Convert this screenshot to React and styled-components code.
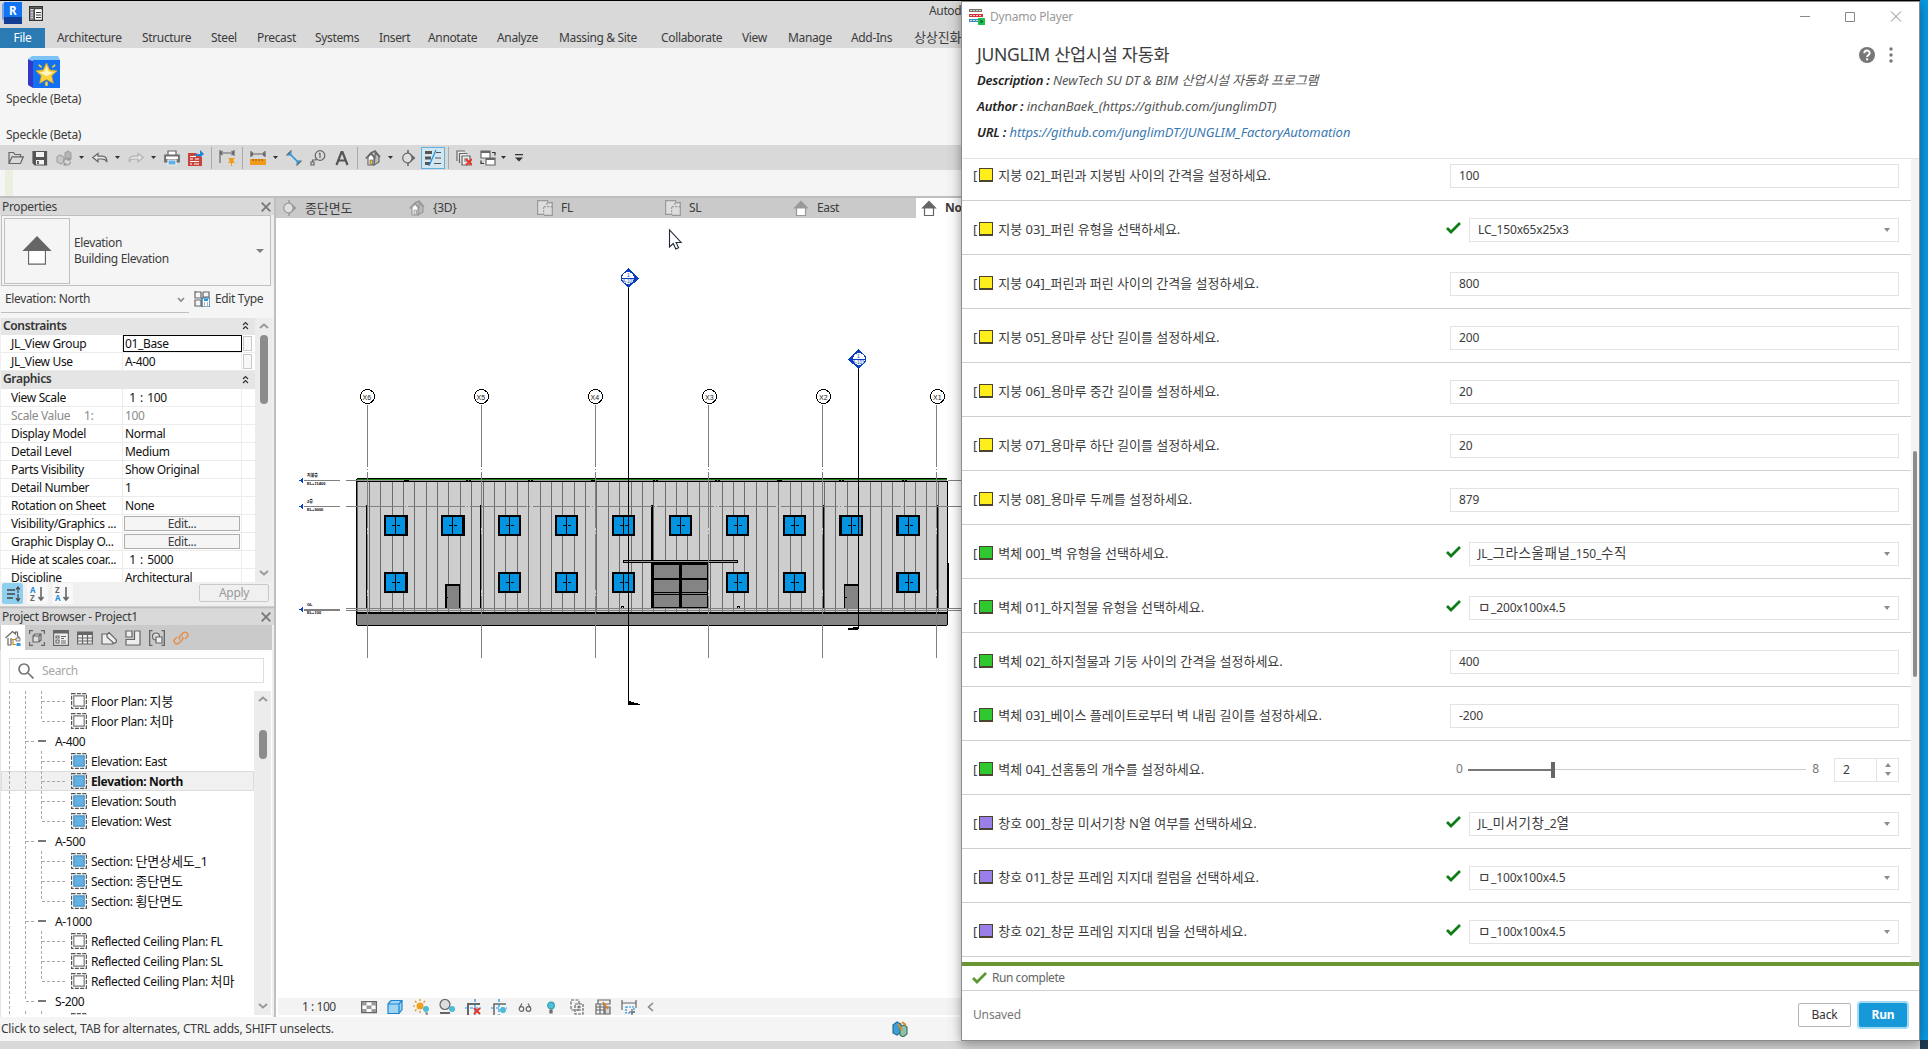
import React from 'react';
import styled, { createGlobalStyle, css } from 'styled-components';

const Global = createGlobalStyle`
  * { box-sizing: border-box; }
  body { margin: 0; overflow: hidden; background: #0a9be6; }
  svg { display: block; flex: none; }
`;
const ui = '"Noto Sans", "Noto Sans CJK KR", sans-serif';

const Desktop = styled.div`
  position: relative; width: 1928px; height: 1049px; overflow: hidden;
  font: 12px/16px ${ui}; letter-spacing: -0.35px; color: #3c3c3c; white-space: nowrap;
  background: linear-gradient(#1b3c52, #1b3c52) right bottom / 8px 9px no-repeat, #0a9be6;
`;
const Revit = styled.div`
  width: 1920px; height: 1049px; border-top: 1px solid #000; background: #d9d9d9;
  display: flex; flex-direction: column;
`;
const Ko = styled.span`font-size: 13px; letter-spacing: -0.1px;`;

/* ---------- title, ribbon ---------- */
const TitleBar = styled.div`
  height: 27px; display: flex; align-items: flex-start; padding: 1px 0 0 2px; flex: none;
`;
const AppTitle = styled.span`margin: 1px 0 0 886px; width: 32px; overflow: hidden;`;
const Tabs = styled.div`height: 20px; display: flex; flex: none; line-height: 19px;`;
const FileTab = styled.div`width: 45px; background: #2a7ab4; color: #fff; text-align: center; margin-right: 12px;`;
const Tab = styled.div`width: ${p => p.$w}px; flex: none;`;
const Ribbon = styled.div`
  height: 97px; background: #f5f5f5; flex: none; display: flex; flex-direction: column;
  padding: 8px 0 0 6px;
  svg { margin-left: 22px; }
`;
const RibbonText = styled.div`margin-top: ${p => p.$t}px; letter-spacing: -0.25px;`;
const QuickBar = styled.div`height: 25px; display: flex; align-items: center; flex: none;`;
const Slot = styled.div`
  margin-left: ${p => p.$g}px; width: ${p => p.$w || 16}px; flex: none;
  ${p => p.$on && css`height: 22px; border: 1px solid #5db2e2; background: #d3e6f0; padding: 2px 3px;`}
`;
const Divider = styled.div`width: 1px; height: 22px; margin-left: ${p => p.$g}px; background: #a9a9a9;`;
const Caret = styled.div`
  width: 5px; height: 3px; flex: none; margin-left: ${p => p.$g}px; background: #333;
  clip-path: polygon(0 0, 100% 0, 50% 100%);
`;
const OptionsBar = styled.div`
  height: 28px; background: #f5f5f5; border-bottom: 2px solid #bfbfbf; flex: none; padding-left: 5px;
`;
const GreenMark = styled.div`width: 8px; height: 26px; background: #ebefe0;`;

/* ---------- work area ---------- */
const Work = styled.div`height: 819px; display: flex; flex: none;`;
const Side = styled.div`
  width: 276px; border-right: 2px solid #bfbfbf; background: #f0f0f0; flex: none;
  display: flex; flex-direction: column;
`;
const PanelHead = styled.div`
  height: ${p => p.$h || 17}px; background: #d9d9d9; display: flex; align-items: center; justify-content: space-between;
  padding: 0 3px 0 2px; flex: none;
`;
const TypeBox = styled.div`
  height: 71px; margin: 0 3px 0 1px; border: 1px solid #bfbfbf; background: #f5f5f5; flex: none;
  display: flex; align-items: center; padding: 0 6px 0 2px;
`;
const TypePic = styled.div`
  width: 66px; height: 66px; border: 1px solid #bfbfbf; display: flex; align-items: center; justify-content: center;
  padding-bottom: 2px;
`;
const TypeText = styled.div`flex: 1; padding: 0 0 0 4px;`;
const BigCaret = styled.div`border: 4px solid transparent; border-top-color: #808080; border-bottom: 0;`;
const InstanceRow = styled.div`height: 32px; flex: none; display: flex; padding: 2px 0 4px 1px; background: #f5f5f5;`;
const InstanceSelect = styled.div`
  width: 188px; height: 25px; border-bottom: 1px solid #bfbfbf; padding: 3px 4px; display: flex; justify-content: space-between;
`;
const EditType = styled.div`display: flex; gap: 5px; padding: 3px 0 0 5px;`;
const GridArea = styled.div`height: 264px; flex: none; display: flex; overflow: hidden; padding-left: 1px;`;
const GridRows = styled.div`width: 254px; background: #fff; color: #111;`;
const GroupRow = styled.div`
  height: ${p => p.$h}px; background: #e5e5e5; font-weight: 600; padding: 0 6px 2px 2px; color: #333;
  display: flex; align-items: center; justify-content: space-between;
`;
const PropRow = styled.div`
  height: 18px; display: grid; grid-template-columns: 122px 119px 12px; border-bottom: 1px solid #ececec; line-height: 17px;
  color: ${p => (p.$dim ? '#8a8a8a' : '#111')};
`;
const Cell = styled.div`
  padding-left: ${p => p.$p}px; border-right: 1px solid #ececec; overflow: hidden; white-space: pre;
  ${p => p.$loose && css`word-spacing: 1.5px;`}
  ${p => p.$focus && css`border: 1px solid #000; padding-left: 1px; line-height: 15px;`}
`;
const EditBtn = styled.div`
  margin: 1px; height: 15px; border: 1px solid #adadad; background: #f5f5f5; color: #3c3c3c;
  text-align: center; line-height: 14px;
`;
const Mini = styled.div`width: 9px; height: 15px; border: 1px solid #c9c9c9; margin: 1px; background: #f8f8f8;`;
const Scroll = styled.div`
  width: 17px; background: #ececec; display: flex; flex-direction: column; align-items: center; padding: 5px 0 6px;
`;
const Thumb = styled.div`width: 8px; height: ${p => p.$h}px; margin-top: ${p => p.$t}px; border-radius: 4px; background: #8c8c8c;`;
const Push = styled.div`flex: 1;`;
const SortBar = styled.div`height: 24px; flex: none; display: flex; padding: 1px 5px 0 2px; gap: 4px;`;
const SortBtn = styled.div`
  width: 21px; height: 21px; display: flex; align-items: center; justify-content: center;
  background: ${p => (p.$on ? '#8fd0f0' : '#f8f8f8')}; border-radius: 2px;
`;
const Apply = styled.div`
  width: 70px; height: 18px; border: 1px solid #c9c9c9; border-radius: 2px; color: #9a9a9a; text-align: center; margin-top: 1px;
`;
const PanelGap = styled.div`height: 3px; border: 1px solid #d0d0d0; border-width: 1px 0; background: #bfbfbf; flex: none;`;
const BrowserTabs = styled.div`
  height: 25px; width: 272px; background: #cacaca; display: flex; align-items: center; flex: none; padding-left: 1px;
`;
const BrowserTab = styled.div`
  width: 24px; height: 25px; display: flex; align-items: center; justify-content: center;
  background: ${p => (p.$on ? '#fff' : 'transparent')};
`;
const BrowserBody = styled.div`width: 272px; flex: 1; background: #fff; display: flex; flex-direction: column; border-left: 1px solid #e5e5e5;`;
const SearchBox = styled.div`
  width: 255px; height: 25px; margin: 8px 0 8px 8px; border: 1px solid #dedede; display: flex; align-items: center;
  gap: 8px; padding-left: 8px; color: #a8a8a8; flex: none;
`;
const TreeArea = styled.div`height: 324px; display: flex; overflow: hidden; color: #111; flex: none;`;
const Tree = styled.div`width: 253px;`;
const TreeRow = styled.div`
  height: 20px; display: flex; align-items: center;
  ${p => p.$sel && css`background: #f0f0f0; box-shadow: inset 0 0 0 1px #dcdcdc; font-weight: 700;`}
`;
const TreeText = styled.span`padding-left: ${p => p.$p}px; padding-top: 1px;`;

const Doc = styled.div`width: 685px; display: flex; flex-direction: column; background: #fff;`;
const DocTabs = styled.div`height: 20px; display: flex; background: #cacaca; flex: none;`;
const DocTab = styled.div`
  width: 128px; flex: none; display: flex; align-items: center; gap: 8px; padding-left: 5px;
  ${p => p.$on && css`background: #fff; font-weight: 700;`}
`;
const ViewBar = styled.div`
  height: 17px; background: #f3f3f3; margin-left: 2px; display: flex; align-items: center; gap: 10px; padding-left: 24px;
`;
const ViewScale = styled.span`width: 49px; letter-spacing: -0.45px;`;
const Status = styled.div`
  height: 24px; background: #f5f5f5; flex: none; display: flex; align-items: center; padding-left: 1px; letter-spacing: -0.21px;
`;
const StatusText = styled.span`width: 891px;`;

/* ---------- player window ---------- */
const Player = styled.div`
  position: absolute; left: 961px; top: 1px; width: 959px; height: 1040px; background: #fff;
  border: 1px solid #8a8a8a; box-shadow: 0 0 14px rgba(0, 0, 0, 0.28), 0 6px 8px rgba(0, 0, 0, 0.15);
  display: flex; flex-direction: column; letter-spacing: -0.15px; color: #3c3c3c;
`;
const PTitle = styled.div`height: 30px; display: flex; align-items: center; padding: 0 17px 0 7px; color: #999; flex: none;`;
const PTitleText = styled.span`flex: 1; padding-left: 5px; letter-spacing: -0.2px;`;
const PHead = styled.div`height: 127px; padding: 10px 26px 0 15px; border-bottom: 1px solid #e3e3e3; flex: none;`;
const PHeadTop = styled.div`display: flex; align-items: center; gap: 14px;`;
const PName = styled.div`flex: 1; font-size: 17.5px; line-height: 25px; letter-spacing: -0.25px;`;
const PInfo = styled.div`
  font-style: italic; font-size: 13px; letter-spacing: -0.03px; line-height: 26px; color: #555;
  b { color: #222; font-weight: 600; letter-spacing: -0.2px; } a { color: #3a78b0; }
`;
const PBody = styled.div`height: 803px; display: flex; overflow: hidden; flex: none;`;
const PList = styled.div`width: 949px; margin-top: -12.5px; flex: none;`;
const PRow = styled.div`
  height: 54px; border-bottom: 1px solid #cfcfcf; display: flex; padding: 17px 12px 0 11px; align-items: flex-start;
`;
const Swatch = styled.span`
  width: 14px; height: 14px; border: 1px solid #4a4430; border-bottom-width: 2px; background: ${p => p.$c}; margin: 0 5px 0 2px;
`;
const PLabel = styled.div`
  width: ${p => p.$w}px; display: flex; align-items: center; height: 22px; font-size: 13px; letter-spacing: 0; flex: none;
`;
const PField = styled.div`
  flex: 1; height: 24px; border: 1px solid #e3e3e3; padding: 0 8px; display: flex; align-items: center; justify-content: space-between;
`;
const ValueKo = styled.span`font-size: 13.5px; letter-spacing: 0.6px;`;
const PCheck = styled.div`width: 23px; padding-top: 4px;`;
const GreyCaret = styled.div`border: 3.5px solid transparent; border-top: 4px solid #8c8c8c; border-bottom: 0;`;
const SliderEnd = styled.span`color: #777; padding: 3px 5px 0 6px;`;
const Track = styled.div`flex: 1; height: 24px; display: flex; align-items: center;`;
const TrackFill = styled.div`width: 83px; height: 2px; background: #777;`;
const TrackKnob = styled.div`width: 4px; height: 16px; background: #666;`;
const TrackRest = styled.div`flex: 1; height: 1px; background: #ccc;`;
const SpinField = styled.div`width: 65px; height: 24px; border: 1px solid #e3e3e3; display: flex; margin-left: 10px;`;
const SpinValue = styled.div`width: 42px; padding: 3px 8px; border-right: 1px solid #e3e3e3;`;
const SpinBtns = styled.div`flex: 1; display: flex; flex-direction: column; align-items: center; justify-content: space-around; padding: 2px 0;`;
const UpCaret = styled.div`border: 3px solid transparent; border-bottom: 4px solid #8c8c8c; border-top: 0;`;
const PScroll = styled.div`width: 8px; background: #f3f3f3; padding: 292px 2px 0;`;
const PThumb = styled.div`height: 226px; background: #8c8c8c; border-radius: 2px;`;
const GreenBar = styled.div`height: 4px; background: #6a9532; flex: none;`;
const PResult = styled.div`
  height: 25px; border-bottom: 1px solid #d2d2d2; display: flex; align-items: center; gap: 5px; padding-left: 10px;
  color: #666; flex: none; letter-spacing: -0.45px;
`;
const PFoot = styled.div`flex: 1; display: flex; align-items: center; gap: 8px; padding: 0 12px 2px 11px; color: #777;`;
const PBtn = styled.div`
  width: ${p => (p.$primary ? 48 : 53)}px; height: 24px; line-height: 22px; text-align: center; border-radius: 2px; color: #333;
  border: 1px solid #b5b5b5;
  ${p => p.$primary && css`background: #1798d8; border-color: #1798d8; color: #fff; font-weight: 700; box-shadow: 0 0 0 2px #a6daf3;`}
`;

/* ---------- icons ---------- */
const G = '#666';
const S = ({ w = 16, h = 16, vb, children, ...r }) => (
  <svg width={w} height={h} viewBox={vb || `0 0 ${w} ${h}`} fill="none" stroke={G} strokeWidth="1.2" {...r}>{children}</svg>
);
const CloseX = ({ c = '#777', s = 10, w = 1.8 }) => <S w={s} h={s} stroke={c} strokeWidth={w}><path d={`M.7 .7L${s - .7} ${s - .7}M${s - .7} .7L.7 ${s - .7}`} /></S>;
const Chevron = ({ up, c = '#999' }) => <S w={10} h={6} stroke={c} strokeWidth="2"><path d={up ? 'M1 5L5 1.5L9 5' : 'M1 1L5 4.5L9 1'} /></S>;
const DoubleUp = () => <S w={7} h={9} stroke="#333"><path d="M1 4L3.5 1.5L6 4M1 8L3.5 5.5L6 8" /></S>;

const IcR = () => (
  <S w={20} h={22} stroke="none"><path d="M0 2L3 0V20L0 17z" fill="#6fa4ea" /><path d="M2 0h18v16H2z" fill="#1273f5" /><path d="M2 15h18v7H2z" fill="#123f94" />
    <text x="7" y="12.5" fontSize="11.5" fontWeight="700" fontFamily="Noto Sans" fill="#fff">R</text></S>);
const IcPanel = () => (
  <S w={14} h={15} stroke="#333"><path d="M.6 .6h12.8v13.8H.6z" fill="#fff" /><path d="M1 2.200h12" stroke="#444" strokeWidth="2" /><path d="M1 4h4v10H1z" fill="#8b8b98" stroke="none" /><path d="M2 6.500h2M2 9h2M2 11.500h2" stroke="#ddd" /><path d="M5.3 3v11M7 6.500h5M7 9h5M7 11.500h5" /></S>);
const IcStarCube = () => (
  <S w={32} h={32} stroke="none"><path d="M0 3L5 5V32L0 29z" fill="#3437c8" /><path d="M0 3L4 0H30L32 4L5 5z" fill="#7ec3f7" /><path d="M5 4h27v28H5z" fill="#1370f2" />
    <path d="M18.500 7l3.200 7 7.300.8-5.300 5 1.600 7.400-6.800-3.700-6.800 3.700 1.600-7.400-5.300-5 7.300-.8z" fill="#fbd33c" stroke="#e2a51c" strokeWidth=".8" /><path d="M18.500 10l2 5.500 5 .8-7 4-7-4 5-.8z" fill="#fff6c0" /><path d="M11 8l3 2.500-.5 1.500-3-2zM27 8l-3 2.500.5 1.500 3-2zM17 27l1.500-2 1.500 2-.5 3h-2z" fill="#f3cf39" /></S>);
const IcOpen = () => <S><path d="M1 13.500V2.500h4.500l1.500 2h5.500v2.500M1 13.500L4 6.800h11.300L12.500 13.500z" /></S>;
const IcSave = () => <S><path d="M1 1.500h13.500v13.500H3l-2-2z" fill="#555" stroke="#555" /><path d="M4 2h8v5H4z" fill="#f2f2f2" stroke="none" /><path d="M4 10h8v4.500H4z" fill="#f2f2f2" stroke="none" /><path d="M6 11v3" strokeWidth="2" /></S>;
const IcSync = () => <S stroke="#a5a5a5"><path d="M1 7l3-2 4 2v5l-3 2-4-2z" fill="#c6c6c6" /><path d="M9 3l3-2 3 2v6l-3 1-3-2z" fill="#b5b5b5" /><path d="M7.500 11.500a3.500 3.500 0 0 1 6-2M14.500 11.500a3.500 3.500 0 0 1-6 2.500M13.800 7.500v2.300h-2.300M8.200 15.800v-2.300h2.300" stroke="#999" /></S>;
const IcUndo = ({ c = G, flip }) => <S stroke={c}><path transform={flip ? 'matrix(-1 0 0 1 16 0)' : undefined} d="M.8 7.500L6 3.500v2.700h4c3.500 0 5 2 5 5.800-1-2.300-2.500-3-5-3H6v2.700z" fill="#e8e8e8" /></S>;
const IcPrint = () => <S><path d="M4 5V1h8v4" fill="#fff" /><path d="M.8 5h14.400v7H.8z" fill="#777" /><path d="M2 6.500h12v2.500H2z" fill="#fff" stroke="none" /><path d="M4 10h8v5H4z" fill="#5fb0e4" stroke="#eee" /></S>;
const IcPdf = () => <S stroke="none"><path d="M0 3h8l6 4v9H0z" fill="#c8433c" /><path d="M2 6.500h6M2 9h3M7 9h4M2 11.500h9M2 14h2M6 14h5" stroke="#fff" strokeWidth="1.200" /><path d="M7 4h5V0l4 4-4 3.500V6H7z" fill="#1b87d6" /></S>;
const IcDimPin = () => <S><path d="M1 0v13M15 0v6M1 3h14M3.500 1L1 3l2.500 2M12.500 1L15 3l-2.500 2" /><path d="M9 8h7l-1.500 1.500v2L16 13H9l1.500-1.500v-2zM12 13h1v3h-1z" fill="#f09a17" stroke="none" /></S>;
const IcMeasure = () => <S><path d="M1 1v6M15 1v6M1 4h14M3 2.500L1 4l2 1.500M13 2.500L15 4l-2 1.500" /><path d="M0 9h16v6H0z" fill="#ef9a1a" stroke="none" /><path d="M3 9v2M6 9v2M9 9v2M12 9v2" stroke="#7a4a00" strokeWidth=".8" /></S>;
const IcAligned = () => <S><path d="M3 3l10 10" stroke="#1b8fe0" strokeWidth="1.500" /><path d="M3 6V3h3M10 13h3v-3" stroke="#1b8fe0" /><path d="M.5 5.500L5.500 .5M10.500 15.500L15.500 10.500" /></S>;
const IcTag = () => <S><circle cx="10" cy="5.500" r="4.800" /><path d="M10 3v5M9 4l1-1M6 8.500v1.500H2.500v2M1 12h3v3H1z" /></S>;
const IcA = () => <S stroke="#555" strokeWidth="2.200"><path d="M2.500 15L7.500 2h1L13.500 15M4.500 10.500h7" /></S>;
const IcHouse = ({ c = G, door = '#f7c637' }) => <S stroke={c}><path d="M3 7v8h6V7L6 4z" fill="#fff" /><path d="M9 15l5-3V6L10 3v4z" fill="#bbb" /><path d="M.8 8.500L6 3l4 5M6 3l4-2 5 6" strokeWidth="1.600" /><path d="M5 10h2.500v4.500H5z" fill={door} strokeWidth=".8" /></S>;
const IcSection = ({ c = G }) => <S stroke={c}><path d="M8 0v3M8 13v3" strokeWidth="1.500" /><circle cx="7.500" cy="8" r="4.800" fill="#e0e0e0" /><path d="M9 2.500L15.500 8L9 13.500L12 8z" fill={c} stroke="none" /></S>;
const IcThin = () => <S stroke="#555"><path d="M0 2.500h7M0 8h6M0 13.500h5" strokeWidth="3" /><path d="M11 2.500h5M10 8h6M9 13.500h7" /><path d="M11 0L4 16" stroke="#1b8fe0" /></S>;
const IcCloseWin = () => <S><path d="M1 11V1h8M3.500 13V3.500h8M6 6h8v9H6z" fill="#eee" /><path d="M8 9h4M8 11h3" /><path d="M10 9l6 6M16 9l-6 6" stroke="#e2382c" strokeWidth="2" /></S>;
const IcSwitch = () => <S><path d="M1 1h9v7H1zM6 8h9v7H6z" fill="#fff" /><path d="M1 2h9M6 9h9" strokeWidth="2" /><path d="M12 2.500h3v3M4 13.500H1v-3" stroke="#333" /></S>;
const IcCustomize = () => <S w={8} h={8} stroke="none" fill="#333"><path d="M0 0h8v1.300H0zM0 3.500h8L4 7.500z" /></S>;

const IcElev = ({ s = 16, c = '#666' }) => <S w={s} h={s} vb="0 0 16 16" strokeWidth={s > 20 ? .6 : 1.200}><path d="M3.500 7.500h9V15.500h-9z" fill="#fff" stroke={c} /><path d="M8 .5L15.800 8.500H.2z" fill={c} stroke="none" /></S>;
const IcPlan = () => <S stroke="#999"><path d="M1 1h9v13H1z" fill="#ddd" stroke="none" /><path d="M7 3h8v12H7z" fill="#ddd" stroke="none" /><path d="M10.500 2.500V.6H.6v13.800H6.500M10.500 2.600h4.800V15.400H7" /><path d="M6.600 7v8M7 6.600h8M10 3v3" strokeDasharray="2 1.200" /></S>;
const IcEditType = () => <S w={16}><path d="M1 1h6v6H1zM9 1h6v5M1 9h6v6H1zM1 1l1-1M9 1v5h6" /><path d="M8 7h8v9H8z" fill="#fff" stroke="#1c5f93" /><path d="M10 9h4" stroke="#2196e3" strokeWidth="2" /><path d="M10 12h1M13 12h1M10 14h1M13 14h1" /></S>;
const IcSort = ({ a, b }) => (
  <S w={16}><text x="0" y="7" fontSize="8" fontWeight="700" fontFamily="Noto Sans" stroke="none" fill={a === 'A' ? '#2a8fd8' : '#666'}>{a}</text>
    <text x="0" y="15" fontSize="8" fontWeight="700" fontFamily="Noto Sans" stroke="none" fill={b === 'A' ? '#2a8fd8' : '#666'}>{b}</text>
    <path d="M11 1v13M8.500 11l2.500 3 2.500-3" strokeWidth="1.600" /></S>);
const IcSortList = () => <S stroke="#444"><path d="M2 4h8M2 8h8M2 12h6" strokeWidth="1.500" /><path d="M13 1v6M11 3.500L13 1l2 2.500M13 8v7M11 12l2 3 2-3" /></S>;

const IcBHome = () => <S><path d="M.5 8L7.500 1.500l3 2.500V2h2v4l2 2M3 8v7h3M6 8v7" /><path d="M6.500 9.500H11M8 9.500v5h3" stroke="#c98a1a" /><path d="M11 8h4v3h-4z" fill="#eee" strokeWidth=".8" /><path d="M11.500 13h4v3h-4z" fill="#2f96dc" stroke="none" /></S>;
const IcBView = () => <S><path d="M.6 4V.6H4M12 .6h3.400V4M.6 12v3.400H4M12 15.400h3.400V12" /><path d="M4 6l2-2h6v6l-2 2H4zM4 6h6v6M10 6l2-2" fill="#ddd" /></S>;
const IcBLegend = () => <S><path d="M.6 .6h14.800v14.800H.6z" fill="#eee" /><path d="M1 2h14" strokeWidth="3" /><path d="M3 6h3v2H3zM3 10h3v3H3zM8 6.500h5M8 8.500h3M8 11h5M8 13h5" /></S>;
const IcBTable = () => <S><path d="M.6 2h14.800v12H.6z" fill="#eee" /><path d="M1 3.500h14" strokeWidth="3" /><path d="M1 8h14M1 11h14M5.500 5v9M10.500 5v9" /></S>;
const IcBSheet = () => <S><path d="M1 14V4h6l5 5v5z" fill="#eee" /><path d="M6 4.500l2-1.800 7 7c1 1.500 0 4-2.500 3.300L6 7z" fill="#eee" /></S>;
const IcBLayout = () => <S><path d="M1 1h6v6H1zM9.500 1H15v14H1V9.500h8.500z" fill="#eee" /></S>;
const IcBGroup = () => <S><path d="M3.500 .6H.6v14.800h2.900M12.500 .6h2.900v14.800h-2.900" strokeWidth="1.500" /><circle cx="7" cy="6.500" r="3.500" fill="#ddd" /><path d="M7 7h6v6H7z" fill="#eee" /></S>;
const IcLink = () => <S stroke="#e2904a" strokeWidth="1.500"><path d="M7 9.500a2.500 2.500 0 0 1 0-3.500l3-3a2.700 2.700 0 0 1 4 4L12 9M9 6.500a2.500 2.500 0 0 1 0 3.500l-3 3a2.700 2.700 0 0 1-4-4L4 7" /></S>;
const IcSearch = () => <S stroke="#777" strokeWidth="1.700"><circle cx="6" cy="6" r="5" /><path d="M10 10l5.500 5.500" /></S>;

const TreeLines = ({ kind, last }) => (
  <svg width={kind === 'leaf' ? 70 : 46} height="20" fill="none">
    <g stroke="#a8a8a8" strokeDasharray="3 2">
      <path d={`M8.500 0V20M24.500 0V${last && kind === 'group' ? 10 : 20}`} />
      {kind === 'leaf' && <path d={`M40.500 0V${last ? 10 : 20}M41 10.500H65`} />}
      {kind === 'group' && <path d="M25 10.500H34" />}
    </g>
    {kind === 'group' && <path d="M37 9h8v2h-8z" fill="#777" />}
  </svg>
);
const IcView = ({ on }) => (
  <S><path d="M.6 .6h14.800v14.800H.6z" stroke="#555" strokeDasharray="4 1.300" /><path d="M2.800 2.800h10.400v10.400H2.800z" fill={on ? '#62b0e4' : '#fff'} stroke={on ? '#4a93c4' : '#777'} /></S>);

const viewIcons = [
  <g key="a"><path d="M.6 2.600h14.800v11H.6z" fill="#fff" strokeWidth="1.400" /><path d="M1 3h4.500v3.500H1zM10.500 3H15v3.500h-4.500zM5.500 6.500h5v3.500h-5zM1 10h4.500v3H1zM10.500 10H15v3h-4.500z" fill="#9a9a9a" stroke="none" /></g>,
  <g key="b" stroke="#1c86cf"><path d="M1 5l3-3.500h11v9L12 14.500H1z" fill="#9fd4f5" /><path d="M1 5h11v9.500M12 5l3-3.500" /></g>,
  <g key="c"><circle cx="7" cy="7" r="3.500" fill="#f0a01e" stroke="none" /><path d="M7 0v2M7 12v2M0 7h2M2 2l1.500 1.500M12 2l-1.500 1.500M2 12l1.500-1.500" stroke="#e38c12" /><circle cx="13" cy="10" r="3" fill="#4fb9d8" stroke="none" /><path d="M12 14h2v2" /></g>,
  <g key="d"><circle cx="6" cy="5.500" r="5" fill="#ddd" /><path d="M1 14h10" strokeWidth="2" /><circle cx="13" cy="10" r="3" fill="#4fb9d8" stroke="none" /></g>,
  <g key="e"><path d="M3 16V5h12" strokeWidth="2" /><path d="M0 9h16M10 0v16" stroke="#1b8fe0" strokeDasharray="3 2" /><path d="M9 9l6 6M15 9l-6 6" stroke="#e2382c" strokeWidth="2" /></g>,
  <g key="f"><path d="M3 16V5h12" strokeWidth="1.500" /><path d="M0 9h16M8 0v16" stroke="#1b8fe0" strokeDasharray="3 2" /><circle cx="12" cy="11" r="3" fill="#4fb9d8" stroke="none" /></g>,
  <g key="g"><circle cx="4.500" cy="10" r="2.300" /><circle cx="11.500" cy="10" r="2.300" /><path d="M3 8l2-3.500M13 8l-2-3.500" /></g>,
  <g key="h"><circle cx="8" cy="6.500" r="3.300" fill="#4fc1d8" stroke="#2f9db5" /><path d="M7 11h2v3h-2z" fill="#888" /></g>,
  <g key="i"><path d="M2 1h8v10H2z" strokeDasharray="3 1.500" /><path d="M6 5h8v10H6z" strokeDasharray="3 1" /><path d="M8 8h4M8 11h4" /></g>,
  <g key="j"><path d="M3 1h12v4H3zM1 5h8v10H1zM1 8h8M1 11h8M5 5v10" /><path d="M10 8h5v7h-5z" fill="#d8d8d8" /><path d="M8 3l5 7" stroke="#e07c1e" strokeWidth="1.500" /></g>,
  <g key="k"><path d="M1 1v10M15 1v8M1 4h14" /><path d="M5 8h8v6H5z" strokeDasharray="2 1" stroke="#1b8fe0" /><path d="M11 10v6M8 13h6" /></g>,
];

/* ---------- drawing ---------- */
const INK = '#808080';
const Window2 = ({ x, y, w = 23, l = 2 }) => (
  <g>
    <path d={`M${x} ${y}h${w}v21h${-w}z`} fill="#000" />
    <path d={`M${x + l} ${y + 2}h19v17h-19z`} fill="#0294e0" />
    <path d={`M${x + l + 9} ${y + 2}h1v17h-1zM${x + l + 6} ${y + 10}h3v1h-3zM${x + l + 11} ${y + 10}h3v1h-3z`} fill="#000" />
  </g>
);
const Level = ({ y, a, b }) => (
  <g>
    <path d={`M299 ${y + .5}l4-2.500v5z`} fill="#0a3fc0" />
    <path d={`M304 ${y}h36v1h-36z`} fill={INK} />
    <text x="307" y={y - 3} fontSize="4" fontWeight="700">{a}</text>
    <text x="307" y={y + 5} fontSize="4" fontWeight="700">{b}</text>
  </g>
);
const SectionHead = ({ cx, cy, dir }) => (
  <g stroke="#0a3fc0" fill="none">
    <path d={`M${cx} ${cy - 10}L${cx + 10.500 * dir} ${cy + .5}L${cx} ${cy + 10}L${cx - 4 * dir} ${cy + 6}V${cy - 6}z`} fill="#0a3fc0" stroke="none" />
    <circle cx={cx - .5 * dir} cy={cy} r="6.500" fill="#fff" strokeWidth="1.200" />
    <path d={`M${cx - 7} ${cy + .5}h14`} />
    <text x={cx - 1.500} y={cy - 1.500} fontSize="5" fill="#0a3fc0" stroke="none">1</text>
    <text x={cx - 6} y={cy + 5} fontSize="4.500" fill="#0a3fc0" stroke="none">A-101</text>
  </g>
);
const bubbles = [['X6', 367], ['X5', 481], ['X4', 595], ['X3', 708], ['X2', 822], ['X1', 936]];
const seams = Array.from({ length: 51 }, (_, k) => Math.floor(369.300 + k * 11.380));
const marks = Array.from({ length: 9 }, (_, k) => Math.round(404 + k * 62.200));

const Drawing = () => (
  <svg width="685" height="780" viewBox="276 218 685 780" fontFamily="Liberation Sans, Noto Sans CJK KR" shapeRendering="crispEdges" letterSpacing="0">
    <path d="M356 482h592v130H356z" fill="#cecece" />
    {seams.map(x => <path key={x} d={`M${x} 482h1v130h-1z`} fill="#6c6c6c" />)}
    <path d="M357 482h1v130h-1z" fill="#6c6c6c" />
    <path d="M357 478h590v4H357z" fill="#000" />
    <path d="M357 479h590v1H357z" fill="#1c7d12" />
    <path d="M357 480h590v1H357z" fill="#9a9a9a" />
    <path d="M357 614h590v11H357z" fill="#848484" />
    <path d="M357 612h590v2H357zM357 625h590v1H357zM356 479h1v146h-1zM947 481h1v144h-1z" fill="#000" />
    <path d="M366 505h1v103h-1zM480 505h1v103h-1zM651 505h2v103h-2zM823 505h1v103h-1zM937 505h1v103h-1zM947 563h2v45h-2z" fill="#000" />
    {[384, 441].map(x => <Window2 key={x} x={x} y={515} w={24} />)}
    {[498, 555, 612, 669, 726, 783].map(x => <Window2 key={x} x={x} y={515} />)}
    {[839, 896].map(x => <Window2 key={x} x={x} y={515} w={24} l={3} />)}
    <Window2 x={384} y={572} w={24} />
    {[498, 555, 612, 726, 783].map(x => <Window2 key={x} x={x} y={572} />)}
    <Window2 x={896} y={572} w={24} l={3} />
    <path d="M445 584h15v24h-15zM844 584h15v24h-15z" fill="#000" />
    <path d="M447 586h12v22h-12zM845 586h13v22h-13z" fill="#848484" />
    <path d="M446 597h2v1h-2zM845 597h2v1h-2z" fill="#000" />
    <path d="M651 562h57v46h-57z" fill="#000" />
    <path d="M654 565h25v13h-25zM682 565h25v13h-25zM654 580h25v12h-25zM682 580h25v12h-25zM654 593h53v1h-53zM654 595h25v12h-25zM682 595h25v12h-25z" fill="#848484" />
    <path d="M679 592h3v3h-3z" fill="#000" />
    <path d="M623 560h115v3H623z" fill="#000" /><path d="M624 561h113v1H624z" fill="#999" />
    <path d="M621 608v-2h2.500v2M737 608v-2h2.500v2" stroke="#000" fill="none" />
    {marks.map((x, i) => <path key={x} fill="#000" d={i % 3 ? `M${x} 480h2v1h-2zM${x + 3} 480h2v1h-2zM${x} 610h2v1h-2zM${x + 3} 610h2v1h-2z` : `M${x} 480h5v1h-5zM${x} 610h4v1h-4z`} />)}
    <path d="M346 480.500h11M948 480.500h13" stroke={INK} />
    <path d="M346 506.500H961" stroke={INK} strokeDasharray="57 2 1 2.200" />
    <path d="M346 608.500H961M346 610.500H961" stroke={INK} />
    <path d="M304 610.500H340" stroke={INK} />
    {bubbles.map(([t, x]) => (
      <g key={t}>
        <path d={`M${x + .5} 405V467M${x + .5} 469v1M${x + .5} 472V528M${x + .5} 531v1M${x + .5} 534V590M${x + .5} 593v1M${x + .5} 596V658`} stroke={INK} />
        <circle cx={x + (x > 700 ? 1.500 : .5)} cy="396.500" r="7" fill="#fff" stroke="#000" strokeWidth="1" />
        <text x={x - (x > 700 ? 3 : 4.500)} y="399.500" fontSize="7" fill="#222">{t}</text>
      </g>
    ))}
    <path d="M480 505h1v103h-1zM366 505h1v103h-1z" fill="#000" />
    <path d="M628 286h1v419h-1zM858 368h1v261h-1z" fill="#000" />
    <path d="M629 701l11 3v1h-11zM858 627l-10 1v2h10z" fill="#000" />
    <SectionHead cx={628.500} cy={278} dir={1} />
    <SectionHead cx={858.500} cy={359} dir={-1} />
    <Level y={480} a="지붕층" b="EL+11400" />
    <Level y={506} a="2층" b="EL+9000" />
    <Level y={609} a="GL" b="EL+100" />
    <path d="M669.500 230v17l3.800-3.500 2.500 5.500 2.800-1.300-2.500-5.200h5z" fill="#fff" stroke="#222a3a" strokeWidth="1.100" shapeRendering="auto" />
  </svg>
);

/* ---------- data ---------- */
const menu = [['Architecture', 85], ['Structure', 69], ['Steel', 46], ['Precast', 58], ['Systems', 64], ['Insert', 49], ['Annotate', 69], ['Analyze', 62], ['Massing & Site', 102], ['Collaborate', 81], ['View', 46], ['Manage', 63], ['Add-Ins', 63]];
const props1 = [['View Scale', ' 1 : 100'], ['Scale Value     1:', '100', 'dim'], ['Display Model', 'Normal'], ['Detail Level', 'Medium'], ['Parts Visibility', 'Show Original'], ['Detail Number', '1'], ['Rotation on Sheet', 'None'], ['Visibility/Graphics ...', 'Edit...', 'btn'], ['Graphic Display O...', 'Edit...', 'btn'], ['Hide at scales coar...', ' 1 : 5000'], ['Discipline', 'Architectural']];
const tree = [
  ['Floor Plan: ', '지붕', 0], ['Floor Plan: ', '처마', 0, 'last'], 'A-400',
  ['Elevation: East', '', 1], ['Elevation: North', '', 1, 'sel'], ['Elevation: South', '', 1], ['Elevation: West', '', 1, 'last'], 'A-500',
  ['Section: ', '단면상세도_1', 1], ['Section: ', '종단면도', 1], ['Section: ', '횡단면도', 1, 'last'], 'A-1000',
  ['Reflected Ceiling Plan: FL', '', 0], ['Reflected Ceiling Plan: SL', '', 0], ['Reflected Ceiling Plan: ', '처마', 0, 'last'], 'S-200', ['', '', 0],
];
const Y = '#fdee1c', N = '#2fc82f', V = '#9b7fe8';
const rows = [
  [Y, '지붕 02]_퍼린과 지붕빔 사이의 간격을 설정하세요.', '100'],
  [Y, '지붕 03]_퍼린 유형을 선택하세요.', 'LC_150x65x25x3', 'sel'],
  [Y, '지붕 04]_퍼린과 퍼린 사이의 간격을 설정하세요.', '800'],
  [Y, '지붕 05]_용마루 상단 길이를 설정하세요.', '200'],
  [Y, '지붕 06]_용마루 중간 길이를 설정하세요.', '20'],
  [Y, '지붕 07]_용마루 하단 길이를 설정하세요.', '20'],
  [Y, '지붕 08]_용마루 두께를 설정하세요.', '879'],
  [N, '벽체 00]_벽 유형을 선택하세요.', 'JL_그라스울패널_150_수직', 'sel'],
  [N, '벽체 01]_하지철물 유형을 선택하세요.', 'ㅁ_200x100x4.5', 'sel'],
  [N, '벽체 02]_하지철물과 기둥 사이의 간격을 설정하세요.', '400'],
  [N, '벽체 03]_베이스 플레이트로부터 벽 내림 길이를 설정하세요.', '-200'],
  [N, '벽체 04]_선홈통의 개수를 설정하세요.', '2', 'slider'],
  [V, '창호 00]_창문 미서기창 N열 여부를 선택하세요.', 'JL_미서기창_2열', 'sel'],
  [V, '창호 01]_창문 프레임 지지대 컬럼을 선택하세요.', 'ㅁ_100x100x4.5', 'sel'],
  [V, '창호 02]_창문 프레임 지지대 빔을 선택하세요.', 'ㅁ_100x100x4.5', 'sel'],
];

const Check = ({ c = '#0f7d16' }) => <S w={15} h={12} stroke={c} strokeWidth="2.800"><path d="M1 6l4 4L14 1" /></S>;

const Value = ({ text }) => (
  <span>{text.split(/([ㄱ-ㅎ가-힣]+)/).map((part, i) => (i % 2 ? <ValueKo key={i}>{part}</ValueKo> : part))}</span>
);

const PlayerRow = ({ r: [color, label, value, kind] }) => (
  <PRow>
    <PLabel $w={kind === 'sel' ? 473 : 477}>[<Swatch $c={color} />{label}</PLabel>
    {kind === 'sel' && <PCheck><Check /></PCheck>}
    {kind === 'slider' ? (
      <>
        <SliderEnd>0</SliderEnd>
        <Track><TrackFill /><TrackKnob /><TrackRest /></Track>
        <SliderEnd>8</SliderEnd>
        <SpinField><SpinValue>{value}</SpinValue><SpinBtns><UpCaret /><GreyCaret /></SpinBtns></SpinField>
      </>
    ) : <PField><Value text={value} />{kind === 'sel' && <GreyCaret />}</PField>}
  </PRow>
);

export default function App() {
  return (
    <Desktop>
      <Global />
      <Revit>
        <TitleBar>
          <IcR /><Slot $g={7} $w={14}><RibbonText $t={4}><IcPanel /></RibbonText></Slot><AppTitle>Autodesk</AppTitle>
        </TitleBar>
        <Tabs>
          <FileTab>File</FileTab>
          {menu.map(([t, w]) => <Tab key={t} $w={w}>{t}</Tab>)}
          <Tab $w={60}><Ko>상상진화</Ko></Tab>
        </Tabs>
        <Ribbon>
          <IcStarCube />
          <RibbonText $t={3}>Speckle (Beta)</RibbonText>
          <RibbonText $t={20}>Speckle (Beta)</RibbonText>
        </Ribbon>
        <QuickBar>
          <Slot $g={8}><IcOpen /></Slot><Slot $g={8}><IcSave /></Slot><Slot $g={8}><IcSync /></Slot><Caret $g={7} />
          <Slot $g={8}><IcUndo /></Slot><Caret $g={7} /><Slot $g={8}><IcUndo c="#b3b3b3" flip /></Slot><Caret $g={7} />
          <Slot $g={8}><IcPrint /></Slot><Slot $g={8}><IcPdf /></Slot><Divider $g={7} />
          <Slot $g={7}><IcDimPin /></Slot><Divider $g={7} />
          <Slot $g={7}><IcMeasure /></Slot><Caret $g={7} /><Slot $g={8}><IcAligned /></Slot><Slot $g={8}><IcTag /></Slot><Slot $g={8}><IcA /></Slot><Divider $g={7} />
          <Slot $g={7}><IcHouse /></Slot><Caret $g={7} /><Slot $g={7}><IcSection /></Slot><Slot $g={5} $w={24} $on><IcThin /></Slot><Divider $g={3} />
          <Slot $g={7}><IcCloseWin /></Slot><Slot $g={8}><IcSwitch /></Slot><Caret $g={5} /><Slot $g={9} $w={8}><IcCustomize /></Slot>
        </QuickBar>
        <OptionsBar><GreenMark /></OptionsBar>
        <Work>
          <Side>
            <PanelHead>Properties<CloseX /></PanelHead>
            <TypeBox>
              <TypePic><IcElev s={30} /></TypePic>
              <TypeText>Elevation<br />Building Elevation</TypeText>
              <BigCaret />
            </TypeBox>
            <InstanceRow>
              <InstanceSelect>Elevation: North<S w={8} h={16} stroke="#888" strokeWidth="1.600"><path d="M1 7l3 3 3-3" /></S></InstanceSelect>
              <EditType><IcEditType />Edit Type</EditType>
            </InstanceRow>
            <GridArea>
              <GridRows>
                <GroupRow $h={17}>Constraints<DoubleUp /></GroupRow>
                <PropRow><Cell $p={10}>JL_View Group</Cell><Cell $focus>01_Base</Cell><Mini /></PropRow>
                <PropRow><Cell $p={10}>JL_View Use</Cell><Cell $p={2}>A-400</Cell><Mini /></PropRow>
                <GroupRow $h={18}>Graphics<DoubleUp /></GroupRow>
                {props1.map(([k, v, f]) => (
                  <PropRow key={k} $dim={f === 'dim'}>
                    <Cell $p={10}>{k}</Cell>
                    <Cell $p={f === 'btn' ? 0 : 2} $loose={v.includes(':')}>{f === 'btn' ? <EditBtn>{v}</EditBtn> : v}</Cell>
                  </PropRow>
                ))}
              </GridRows>
              <Scroll><Chevron up /><Thumb $h={69} $t={6} /><Push /><Chevron /></Scroll>
            </GridArea>
            <SortBar>
              <SortBtn $on><IcSortList /></SortBtn><SortBtn><IcSort a="A" b="Z" /></SortBtn><SortBtn><IcSort a="Z" b="A" /></SortBtn>
              <Push /><Apply>Apply</Apply>
            </SortBar>
            <PanelGap />
            <PanelHead $h={16}>Project Browser - Project1<CloseX /></PanelHead>
            <BrowserTabs>
              {[IcBHome, IcBView, IcBLegend, IcBTable, IcBSheet, IcBLayout, IcBGroup, IcLink].map((I, i) => <BrowserTab key={i} $on={i === 0}><I /></BrowserTab>)}
            </BrowserTabs>
            <BrowserBody>
              <SearchBox><IcSearch />Search</SearchBox>
              <TreeArea>
                <Tree>
                  {tree.map((t, i) => typeof t === 'string' ? (
                    <TreeRow key={i}><TreeLines kind="group" last={t === 'S-200'} /><TreeText $p={8}>{t}</TreeText></TreeRow>
                  ) : (
                    <TreeRow key={i} $sel={t[3] === 'sel'}>
                      <TreeLines kind="leaf" last={t[3] === 'last'} /><IcView on={t[2]} />
                      <TreeText $p={4}>{t[0]}{t[1] && <Ko>{t[1]}</Ko>}</TreeText>
                    </TreeRow>
                  ))}
                </Tree>
                <Scroll><Chevron up /><Thumb $h={29} $t={28} /><Push /><Chevron /></Scroll>
              </TreeArea>
            </BrowserBody>
          </Side>
          <Doc>
            <DocTabs>
              <DocTab><IcSection c="#999" /><Ko>종단면도</Ko></DocTab>
              <DocTab><IcHouse c="#999" door="#ddd" />{'{3D}'}</DocTab>
              <DocTab><IcPlan />FL</DocTab>
              <DocTab><IcPlan />SL</DocTab>
              <DocTab><IcElev c="#999" />East</DocTab>
              <DocTab $on><IcElev />North</DocTab>
            </DocTabs>
            <Drawing />
            <ViewBar>
              <ViewScale>1 : 100</ViewScale>
              {viewIcons.map((g, i) => <S key={i}>{g}</S>)}
              <S w={7} h={10} stroke="#888" strokeWidth="1.600"><path d="M6 1L1.500 5L6 9" /></S>
            </ViewBar>
          </Doc>
        </Work>
        <Status>
          <StatusText>Click to select, TAB for alternates, CTRL adds, SHIFT unselects.</StatusText>
          <S><path d="M1 4l4-3 4 2v8l-4 3-4-2z" fill="#3e9fd6" stroke="#2a6f98" /><path d="M8 6l4-2 3 2v7l-4 3-3-2z" fill="#8cc2a8" stroke="#47756a" /><path d="M10 1l4 3M6 3l4 6" stroke="#e08a2a" strokeWidth="1.800" /></S>
        </Status>
      </Revit>

      <Player>
        <PTitle>
          <S stroke="none"><path d="M0 0h13v3H0z" fill="#7d7468" /><path d="M0 5h14v3H0z" fill="#d2343c" /><path d="M0 10h10v3H0z" fill="#3f8ec0" /><path d="M1 1.500h11M1 6.500h12M1 11.500h8" stroke="#fff" strokeDasharray="2 1" strokeWidth=".7" /><path d="M9 9h7v7H9z" fill="#1fc24d" /><path d="M11.500 10.500l3 2-3 2z" fill="#063" /></S>
          <PTitleText>Dynamo Player</PTitleText>
          <S w={102} h={12} stroke="#888" strokeWidth="1"><path d="M0 5.500h10M45.500 1.500h9v9h-9zM91 .5l10 10M101 .5l-10 10" /></S>
        </PTitle>
        <PHead>
          <PHeadTop>
            <PName>JUNGLIM 산업시설 자동화</PName>
            <S stroke="none"><circle cx="8" cy="8" r="8" fill="#777" /><path d="M5.300 6.200c0-3.500 5.400-3.500 5.400-.2 0 2-2.600 2-2.600 4" stroke="#fff" strokeWidth="1.900" /><path d="M7.100 11.300h2v2h-2z" fill="#fff" /></S>
            <S w={4} h={16} stroke="none" fill="#777"><circle cx="2" cy="2" r="1.700" /><circle cx="2" cy="8" r="1.700" /><circle cx="2" cy="14" r="1.700" /></S>
          </PHeadTop>
          <PInfo><b>Description : </b>NewTech SU DT &amp; BIM <Ko>산업시설 자동화 프로그램</Ko></PInfo>
          <PInfo><b>Author : </b>inchanBaek_(https://github.com/junglimDT)</PInfo>
          <PInfo><b>URL : </b><a>https://github.com/junglimDT/JUNGLIM_FactoryAutomation</a></PInfo>
        </PHead>
        <PBody>
          <PList>{rows.map(r => <PlayerRow key={r[1]} r={r} />)}</PList>
          <PScroll><PThumb /></PScroll>
        </PBody>
        <GreenBar />
        <PResult><Check c="#5d9732" />Run complete</PResult>
        <PFoot>Unsaved<Push /><PBtn>Back</PBtn><PBtn $primary>Run</PBtn></PFoot>
      </Player>
    </Desktop>
  );
}
